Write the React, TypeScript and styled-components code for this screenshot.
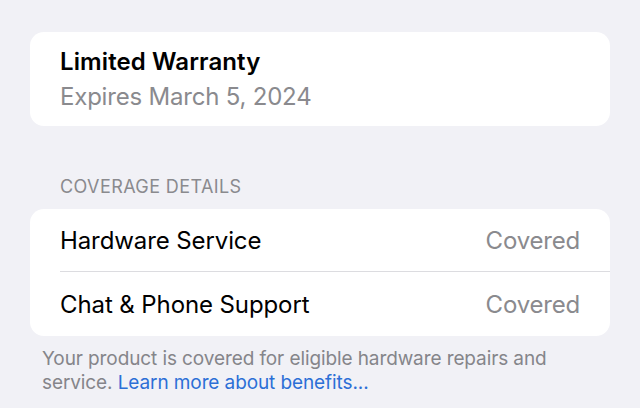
import React from "react";
import styled, { createGlobalStyle } from "styled-components";

const GlobalStyle = createGlobalStyle`
  html, body {
    margin: 0;
    padding: 0;
    background: #f1f1f6;
  }
  body {
    font-family: Inter, "Noto Sans", "Liberation Sans", sans-serif;
    -webkit-font-smoothing: antialiased;
  }
`;

const Page = styled.div`
  width: 640px;
  height: 408px;
  box-sizing: border-box;
  padding: 32px 30px 0 30px;
  overflow: hidden;
`;

const Card = styled.div`
  background: #ffffff;
  border-radius: 14px;
  overflow: hidden;
`;

const WarrantyBody = styled.div`
  padding: 12px 30px;
  display: flex;
  flex-direction: column;
`;

const Title = styled.div`
  font-size: 24px;
  line-height: 35px;
  font-weight: 600;
  color: #000;
  letter-spacing: 0.1px;
`;

const Subtitle = styled.div`
  font-size: 24px;
  line-height: 35px;
  color: #8a8a8e;
  letter-spacing: -0.2px;
`;

const Section = styled.section`
  margin-top: 49px;
`;

const SectionHeader = styled.div`
  padding: 0 30px 10px;
  font-size: 18px;
  line-height: 24px;
  color: #8a8a8e;
  text-transform: uppercase;
  letter-spacing: 0.4px;
`;

const Row = styled.div<{ $last?: boolean }>`
  height: ${(p) => (p.$last ? 64 : 62)}px;
  margin-left: 30px;
  padding-right: 30px;
  display: flex;
  align-items: center;
  justify-content: space-between;
  border-bottom: ${(p) => (p.$last ? "none" : "1px solid #dcdce0")};
  font-size: 24px;
  letter-spacing: -0.1px;
`;

const Label = styled.span`
  color: #000;
`;

const Value = styled.span`
  color: #8a8a8e;
  letter-spacing: -0.2px;
`;

const Footer = styled.p`
  margin: 11px 0 0;
  padding: 0 12px;
  font-size: 19px;
  line-height: 24px;
  color: #85858a;
  letter-spacing: -0.1px;
`;

const Link = styled.a`
  color: #2c6fd6;
  text-decoration: none;
`;

const rows = [
  { label: "Hardware Service", value: "Covered" },
  { label: "Chat & Phone Support", value: "Covered" },
];

export default function App() {
  return (
    <>
      <GlobalStyle />
      <Page>
        <Card>
          <WarrantyBody>
            <Title>Limited Warranty</Title>
            <Subtitle>Expires March 5, 2024</Subtitle>
          </WarrantyBody>
        </Card>
        <Section>
          <SectionHeader>Coverage Details</SectionHeader>
          <Card>
            {rows.map((r, i) => (
              <Row key={r.label} $last={i === rows.length - 1}>
                <Label>{r.label}</Label>
                <Value>{r.value}</Value>
              </Row>
            ))}
          </Card>
          <Footer>
            Your product is covered for eligible hardware repairs and service.{" "}
            <Link href="#">Learn more about benefits...</Link>
          </Footer>
        </Section>
      </Page>
    </>
  );
}
